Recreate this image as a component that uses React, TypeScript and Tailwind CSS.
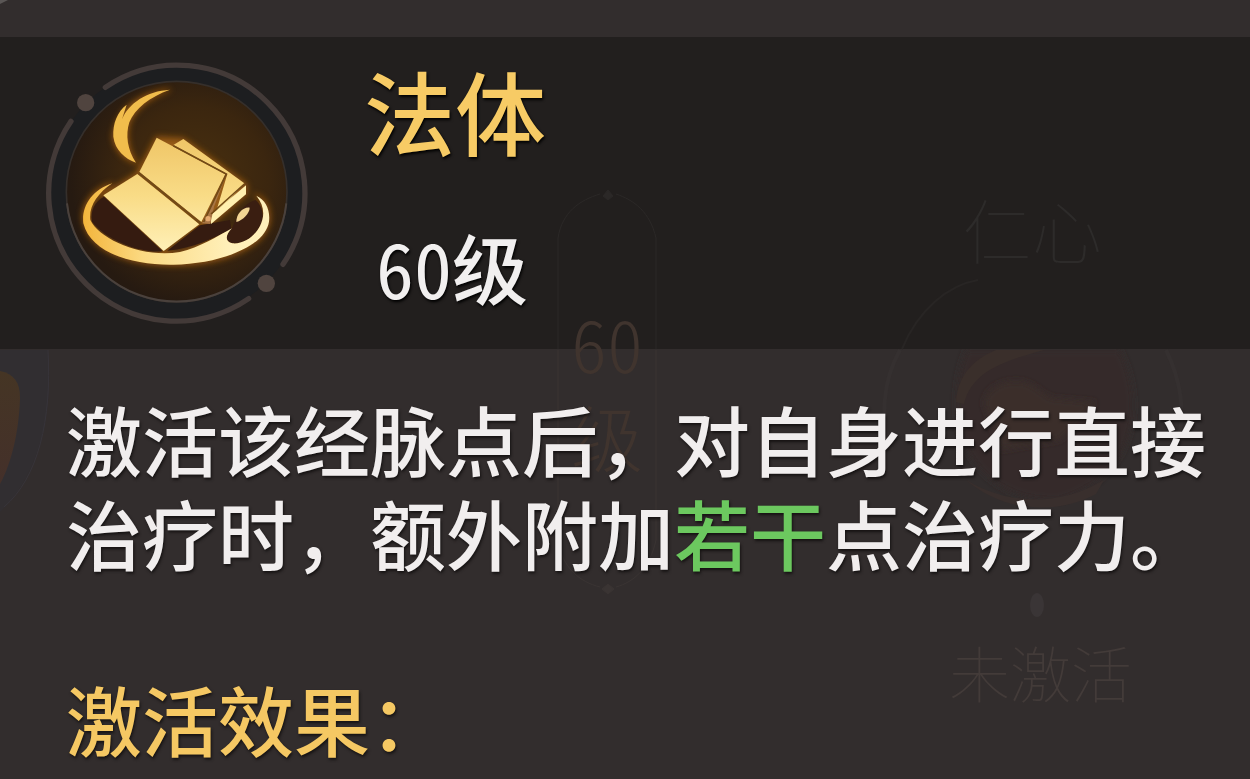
import React from 'react';

const SkillIcon: React.FC = () => (
  <svg viewBox="0 -9 900 936" className="h-[312px] w-[300px] shrink-0" role="img" aria-label="法体">
    <defs>
      <radialGradient id="disc" cx="0.58" cy="0.45" r="0.56">
        <stop offset="0" stopColor="#4a310f" />
        <stop offset="0.6" stopColor="#3b260f" />
        <stop offset="1" stopColor="#261a11" />
      </radialGradient>
      <linearGradient id="gold" gradientUnits="userSpaceOnUse" x1="0" y1="290" x2="0" y2="650">
        <stop offset="0" stopColor="#efc566" />
        <stop offset="0.5" stopColor="#f9dc87" />
        <stop offset="1" stopColor="#fff2bc" />
      </linearGradient>
      <linearGradient id="swirl" gradientUnits="userSpaceOnUse" x1="160" y1="0" x2="600" y2="0">
        <stop offset="0" stopColor="#f3b53c" />
        <stop offset="0.4" stopColor="#fbd981" />
        <stop offset="1" stopColor="#fff0ba" />
      </linearGradient>
      <filter id="glow" x="-20%" y="-20%" width="140%" height="140%">
        <feGaussianBlur stdDeviation="9" />
      </filter>
    </defs>

    <circle cx="440" cy="457" r="356" fill="none" stroke="#1d1e20" strokeWidth="50" />
    <circle cx="440" cy="455" r="331" fill="url(#disc)" stroke="#352f2b" strokeWidth="5" />
    <path d="M111 490A331 331 0 0 0 769 490" fill="none" stroke="#4a413c" strokeWidth="6" />

    <g fill="none" stroke="#433a38" strokeWidth="16" strokeLinecap="round">
      <path d="M226 142A383 383 0 0 1 759 673" />
      <path d="M656 776A383 383 0 0 1 123 244" />
    </g>
    <circle cx="167" cy="188" r="26" fill="#50443f" />
    <circle cx="709" cy="730" r="26" fill="#50443f" />

    <g fill="#c4761a" stroke="#b5640c" strokeWidth="8" opacity="0.65" filter="url(#glow)">
      <path d="M420 149C340 158 262 200 250 290C255 330 285 356 318 368C292 330 286 285 298 247C314 206 360 170 420 149Z" />
      <path d="M380 293L460 297L648 433V462L541 552L508 555L401 633L220 466L322 400Z" />
      <path
        d="M247 430C180 450 150 510 162 550C190 640 310 675 430 674C570 672 700 625 717 545C720 510 710 480 680 467C705 500 708 530 690 562C670 595 640 612 607 610C585 605 585 585 604 567C560 590 510 622 450 636C340 655 210 605 184 545C175 500 205 460 247 430Z"
      />
    </g>

    {/* brown pockets inside the swirl */}
    <path d="M222 470L398 634C330 640 230 600 186 545C180 510 195 485 222 470Z" fill="#351b10" />
    <path d="M412 632L510 556L600 540L604 567C550 595 490 625 412 632Z" fill="#351b10" />
    <path d="M606 565C620 530 640 490 676 480C700 500 704 530 690 558C672 592 640 613 607 610C585 605 585 586 606 565Z" fill="#3a1e11" />

    <path
      d="M420 149C350 153 296 190 276 238L290 194C262 215 248 250 250 290C255 330 285 356 318 368C292 330 286 285 298 247C314 206 360 170 420 149Z"
      fill="#f1bd4c"
    />
    <path
      d="M247 430C185 450 154 500 160 550C182 640 310 676 430 674C570 672 705 620 717 545C721 510 708 480 679 467C702 495 706 525 690 558C672 592 640 613 607 610C585 605 585 586 606 565C560 590 510 622 450 636C340 655 210 600 181 540C176 500 202 460 247 430Z"
      fill="url(#swirl)"
    />
    <path d="M659 503C640 500 618 522 619 546C639 540 659 520 659 503Z" fill="#f1d594" />

    <g fill="url(#gold)">
      <path d="M430 315L460 297L643 430L598 480L560 510L592 402Z" />
      <path d="M648 436V463L543 552L543 525Z" fill="#fff0b0" />
      <path d="M590 402L516 550L541 552L552 500Z" fill="#a97645" />
      <path d="M380 293L586 403L514 546L328 396Z" />
      <path d="M322 402L508 553L401 633L220 466Z" />
    </g>
    <g fill="none" stroke="#724a16" strokeWidth="5">
      <path d="M430 317L589 402L521 546" />
      <path d="M643 432L543 522" />
      <path d="M326 399L512 550" strokeWidth="7" />
    </g>
    <circle cx="534" cy="536" r="8" fill="#e6aa70" />
  </svg>
);

// Talent tree that shows faintly through the panel
const TalentTree: React.FC = () => (
  <div className="pointer-events-none absolute inset-0 overflow-hidden" aria-hidden="true">
    <svg className="absolute left-0 top-0 h-[779px] w-[1250px]" viewBox="0 0 1250 779" fill="none">
      <defs>
        <linearGradient id="edge" x1="0" y1="0" x2="0" y2="1">
          <stop offset="0" stopColor="#453524" />
          <stop offset="1" stopColor="#44302a" />
        </linearGradient>
        <filter id="soft" x="-20%" y="-20%" width="140%" height="140%">
          <feGaussianBlur stdDeviation="3" />
        </filter>
      </defs>
      <path d="M0 0H8L0 4Z" fill="#5a5655" />
      <path d="M0 350H48C54 420 36 478 0 512Z" fill="#312e31" />
      <path d="M48 350C52 420 38 478 4 507" stroke="#37343a" />
      <path d="M0 371C14 374 20 382 20 398C19 430 12 462 0 484Z" fill="url(#edge)" />

      <g stroke="#2b2827">
        <path d="M558 349V238C562 212 580 200 600 194M656 349V238C650 212 634 200 616 194" />
        <path d="M608 190L613 196L608 200L603 196Z" fill="#2b2827" />
      </g>
      <g stroke="#3a3433">
        <path d="M558 350V540C562 568 580 582 600 587M656 350V540C650 568 634 582 616 587" />
        <path d="M608 584L614 589L608 594L602 589Z" fill="#3a3433" />
      </g>

      <path d="M902 349C918 310 948 285 978 280" stroke="#282524" strokeWidth="2" />
      <path d="M900 350C882 382 880 420 892 450M1166 350C1180 378 1186 412 1178 440" stroke="#353030" strokeWidth="4" />
      <g>
        <path d="M966 350H1120C1150 410 1130 480 1060 500C1000 504 958 462 956 408C956 382 960 366 966 350Z" fill="#342b29" filter="url(#soft)" />
        <path d="M956 402C958 376 972 360 996 350H1044C1000 362 972 372 964 404Z" fill="#3a2f2b" />
        <path d="M984 404C986 388 1000 381 1018 381C1034 382 1042 394 1052 398L1096 402L1060 440L1000 450Z" fill="#3a2f2b" filter="url(#soft)" />
        <path d="M966 480C1010 506 1060 506 1104 480L1096 494C1060 514 1006 514 966 480Z" fill="#392f2d" />
        <path d="M940 340H1150V349H940Z" fill="#221f1e" />
      </g>
      <ellipse cx="1037" cy="605" rx="7" ry="12" fill="#3a3536" />
    </svg>
    <span className="absolute left-[962px] top-[184px] text-[70px] leading-[90px] font-thin text-[#2d2b2a]">仁心</span>
    <div className="absolute left-[558px] top-[295px] w-[98px] text-center text-[72px] leading-[93px] font-light text-[#40342e]">
      <div className="[font-feature-settings:'hwid']">60</div>
      <div>级</div>
    </div>
    <span className="absolute left-[949px] top-[627px] text-[61px] leading-[90px] font-thin text-[#433b39]">未激活</span>
  </div>
);

const App: React.FC = () => {
  return (
    <main
      lang="zh-CN"
      className="relative min-h-screen overflow-hidden bg-[#322d2d] pt-[37px] font-['Noto_Sans_CJK_SC',sans-serif]"
    >
      <header className="flex bg-[#221f1e] pl-[30px]">
        <SkillIcon />
        <div className="relative z-10 flex flex-col gap-14 pt-[18px] pl-[34px]">
          <h1 className="text-[91px] leading-[108px] font-medium text-[#f7cb65] [text-shadow:1px_2px_3px_#000]">法体</h1>
          <p className="pl-3 text-[76px] leading-[94px] text-[#f1efef] [font-feature-settings:'hwid'] [text-shadow:1px_2px_3px_#000]">
            60<span className="font-medium">级</span>
          </p>
        </div>
      </header>

      <TalentTree />

      <section className="relative z-10 pt-[42px] pr-10 pl-[66px] text-[76px] leading-[94px] font-medium [text-shadow:1px_2px_3px_#151212]">
        <p className="text-[#f1eeee]">
          激活该经脉点后，对自身进行直接治疗时，额外附加<span className="text-[#6cc85f]">若干</span>点治疗力。
        </p>
        <h2 className="mt-[92px] text-[#f5c863]">激活效果：</h2>
      </section>
    </main>
  );
};

export default App;
